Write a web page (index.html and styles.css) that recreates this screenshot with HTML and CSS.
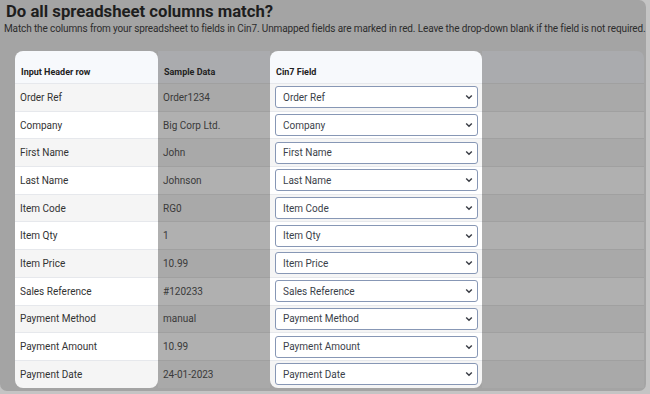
FILE: index.html
```html
<!DOCTYPE html>
<html lang="en">
<head>
    <meta charset="UTF-8">
    <meta name="viewport" content="width=device-width, initial-scale=1.0">
    <title>Column Mapping</title>
    <link rel="stylesheet" href="styles.css">
</head>
<body>
    <div class="card">
        <h1>Do all spreadsheet columns match?</h1>
        <p class="hint">Match the columns from your spreadsheet to fields in Cin7. Unmapped fields are marked in red. Leave the drop-down blank if the field is not required.</p>
        <table class="mapa">
            <thead>
                <tr>
                    <th class="spot">Input Header row</th>
                    <th>Sample Data</th>
                    <th class="spot">Cin7 Field</th>
                    <th class="resto"></th>
                </tr>
            </thead>
            <tbody>
                <tr>
                    <td class="spot">Order Ref</td>
                    <td>Order1234</td>
                    <td class="spot"><div class="campo"><select><option>Order Ref</option></select><svg viewBox="0 0 10 6"><path d="M1.5 1.2 5 4.6 8.5 1.2"/></svg></div></td>
                    <td></td>
                </tr>
                <tr>
                    <td class="spot">Company</td>
                    <td>Big Corp Ltd.</td>
                    <td class="spot"><div class="campo"><select><option>Company</option></select><svg viewBox="0 0 10 6"><path d="M1.5 1.2 5 4.6 8.5 1.2"/></svg></div></td>
                    <td></td>
                </tr>
                <tr>
                    <td class="spot">First Name</td>
                    <td>John</td>
                    <td class="spot"><div class="campo"><select><option>First Name</option></select><svg viewBox="0 0 10 6"><path d="M1.5 1.2 5 4.6 8.5 1.2"/></svg></div></td>
                    <td></td>
                </tr>
                <tr>
                    <td class="spot">Last Name</td>
                    <td>Johnson</td>
                    <td class="spot"><div class="campo"><select><option>Last Name</option></select><svg viewBox="0 0 10 6"><path d="M1.5 1.2 5 4.6 8.5 1.2"/></svg></div></td>
                    <td></td>
                </tr>
                <tr>
                    <td class="spot">Item Code</td>
                    <td>RG0</td>
                    <td class="spot"><div class="campo"><select><option>Item Code</option></select><svg viewBox="0 0 10 6"><path d="M1.5 1.2 5 4.6 8.5 1.2"/></svg></div></td>
                    <td></td>
                </tr>
                <tr>
                    <td class="spot">Item Qty</td>
                    <td>1</td>
                    <td class="spot"><div class="campo"><select><option>Item Qty</option></select><svg viewBox="0 0 10 6"><path d="M1.5 1.2 5 4.6 8.5 1.2"/></svg></div></td>
                    <td></td>
                </tr>
                <tr>
                    <td class="spot">Item Price</td>
                    <td>10.99</td>
                    <td class="spot"><div class="campo"><select><option>Item Price</option></select><svg viewBox="0 0 10 6"><path d="M1.5 1.2 5 4.6 8.5 1.2"/></svg></div></td>
                    <td></td>
                </tr>
                <tr>
                    <td class="spot">Sales Reference</td>
                    <td>#120233</td>
                    <td class="spot"><div class="campo"><select><option>Sales Reference</option></select><svg viewBox="0 0 10 6"><path d="M1.5 1.2 5 4.6 8.5 1.2"/></svg></div></td>
                    <td></td>
                </tr>
                <tr>
                    <td class="spot">Payment Method</td>
                    <td>manual</td>
                    <td class="spot"><div class="campo"><select><option>Payment Method</option></select><svg viewBox="0 0 10 6"><path d="M1.5 1.2 5 4.6 8.5 1.2"/></svg></div></td>
                    <td></td>
                </tr>
                <tr>
                    <td class="spot">Payment Amount</td>
                    <td>10.99</td>
                    <td class="spot"><div class="campo"><select><option>Payment Amount</option></select><svg viewBox="0 0 10 6"><path d="M1.5 1.2 5 4.6 8.5 1.2"/></svg></div></td>
                    <td></td>
                </tr>
                <tr>
                    <td class="spot">Payment Date</td>
                    <td>24-01-2023</td>
                    <td class="spot"><div class="campo"><select><option>Payment Date</option></select><svg viewBox="0 0 10 6"><path d="M1.5 1.2 5 4.6 8.5 1.2"/></svg></div></td>
                    <td></td>
                </tr>
            </tbody>
        </table>
    </div>
</body>
</html>
```

FILE: styles.css
```css
body {
    margin: 0;
    padding: 0;
    background-color: #c4c4c4;
    font-family: Roboto, "Noto Sans", sans-serif;
    color: #2f2f2f;
}

.card {
    width: 646px;
    height: 391px;
    background-color: #a4a4a4;
    border-radius: 0 7px 7px 7px;
    overflow: hidden;
}

.card h1 {
    margin: 0;
    padding: 2px 0 0 6px;
    font-size: 16.7px;
    line-height: 20px;
    font-weight: 700;
    color: #1e1e1e;
}

.hint {
    margin: 0;
    padding: 0 0 0 4px;
    font-size: 10px;
    letter-spacing: -0.12px;
    line-height: 13px;
    color: #2c2c2c;
    white-space: nowrap;
}

.mapa {
    margin: 16px 0 0 15px;
    width: 629px;
    border-collapse: separate;
    border-spacing: 0;
    table-layout: fixed;
    font-size: 10px;
}

.mapa th {
    height: 32px;
    box-sizing: border-box;
    padding: 10px 6px 0;
    text-align: left;
    font-size: 9px;
    font-weight: 700;
    color: #222;
    background-color: #aaabae;
}

.mapa th:nth-child(1) { width: 143px; }
.mapa th:nth-child(2) { width: 112px; }
.mapa th:nth-child(3) { width: 212px; }

.mapa th.spot {
    background-color: #f7f9fc;
    border-radius: 8px 8px 0 0;
}

.mapa th.resto {
    border-top-right-radius: 7px;
}

.mapa tbody tr {
    height: 27.7px;
}

.mapa td {
    padding: 0 5px;
    border-top: 1px solid #a0a0a0;
    background-color: #a9a9a9;
    color: #3a3a3a;
    white-space: nowrap;
}

.mapa tbody tr:nth-child(even) td {
    background-color: #b0b0b0;
}

.mapa td.spot {
    border-top-color: #e6e8ec;
    background-color: #f5f5f5;
    color: #333;
}

.mapa tbody tr:nth-child(even) td.spot {
    background-color: #ffffff;
}

.mapa tbody tr:last-child td.spot {
    border-radius: 0 0 8px 8px;
}

.mapa td.spot:nth-child(3) {
    padding: 0 4px 0 5px;
}

.campo {
    position: relative;
}

.campo select {
    appearance: none;
    width: 100%;
    height: 22px;
    padding: 0 20px 0 7px;
    border: 1px solid #8797b5;
    border-radius: 3px;
    background-color: #fff;
    font-family: Roboto, "Noto Sans", sans-serif;
    font-size: 10px;
    color: #3b3f4a;
}

.campo svg {
    position: absolute;
    right: 5px;
    top: 8px;
    width: 8px;
    height: 6px;
    fill: none;
    stroke: #3a3d45;
    stroke-width: 1.8;
    pointer-events: none;
}
```
